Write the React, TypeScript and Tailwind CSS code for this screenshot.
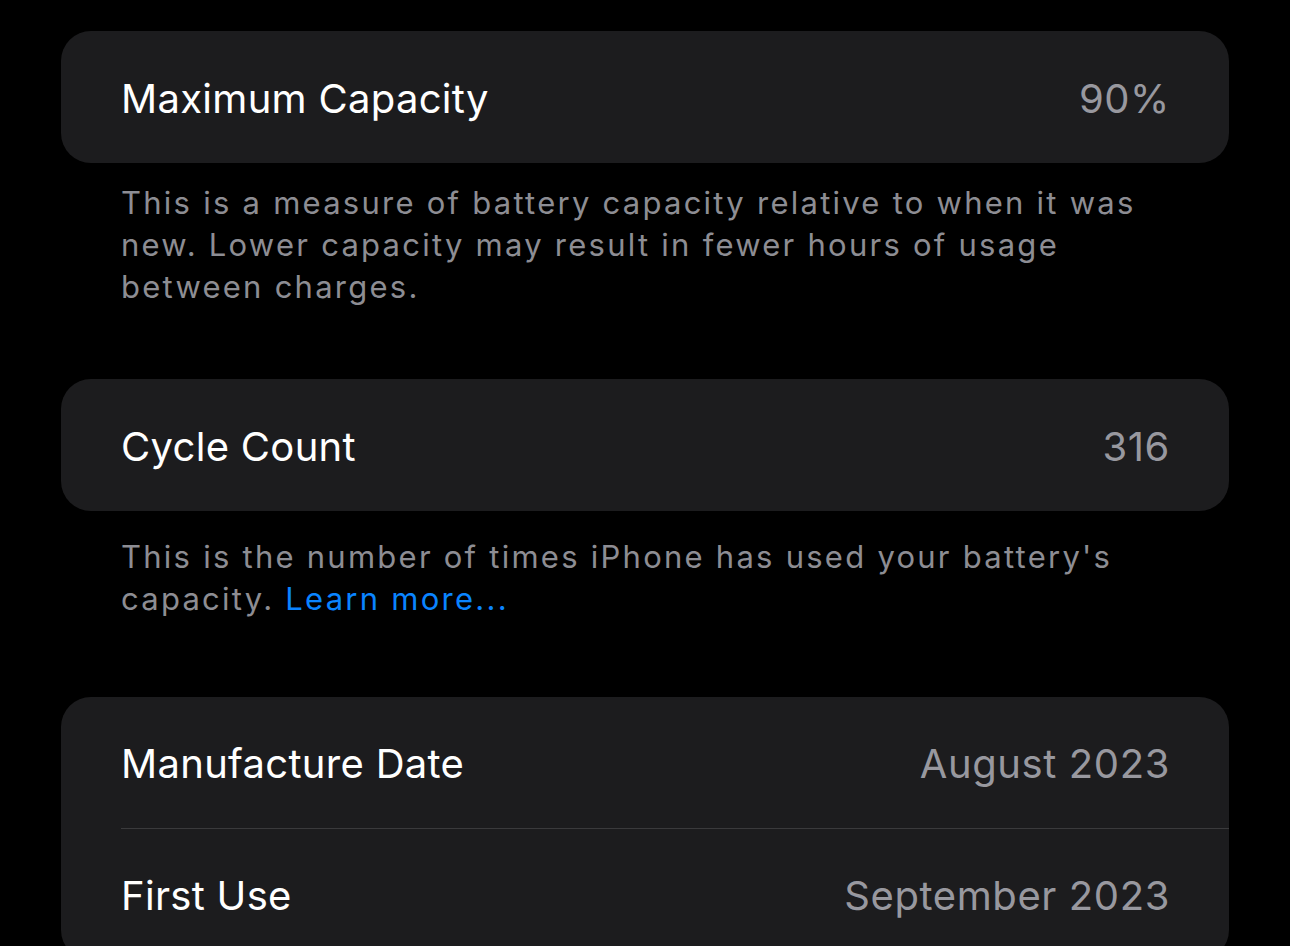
import React from "react";

const font = { fontFamily: "Inter, 'Noto Sans', sans-serif" };

function Row({ label, value }: { label: string; value: string }) {
  return (
    <div className="flex h-[131px] items-center justify-between pr-[59px] pt-[3px]">
      <span className="text-[40px] leading-none tracking-[0.3px] text-white">{label}</span>
      <span className="text-[40px] leading-none tracking-[0.6px] text-[#98989f]">{value}</span>
    </div>
  );
}

export default function App() {
  return (
    <div className="min-h-[946px] w-[1290px] overflow-hidden bg-black px-[61px] pt-[31px]" style={font}>
      <div className="rounded-[30px] bg-[#1c1c1e] pl-[60px]">
        <div className="h-[132px] flex items-center justify-between pr-[59px] pt-[3px]">
          <span className="text-[40px] leading-none tracking-[0.3px] text-white">Maximum Capacity</span>
          <span className="text-[40px] leading-none tracking-[0.6px] text-[#98989f]">90%</span>
        </div>
      </div>
      <p className="mt-[19px] px-[60px] text-[31px] leading-[42px] tracking-[2.25px] text-[#8d8d93] whitespace-nowrap">
        This is a measure of battery capacity relative to when it was
        <br />
        new. Lower capacity may result in fewer hours of usage
        <br />
        between charges.
      </p>

      <div className="mt-[71px] rounded-[30px] bg-[#1c1c1e] pl-[60px]">
        <div className="h-[132px] flex items-center justify-between pr-[59px] pt-[3px]">
          <span className="text-[40px] leading-none tracking-[0.3px] text-white">Cycle Count</span>
          <span className="text-[40px] leading-none tracking-[0.6px] text-[#98989f]">316</span>
        </div>
      </div>
      <p className="mt-[25px] px-[60px] text-[31px] leading-[42px] tracking-[2.25px] text-[#8d8d93] whitespace-nowrap">
        This is the number of times iPhone has used your battery's
        <br />
        capacity. <span className="text-[#0a84ff]">Learn more...</span>
      </p>

      <div className="mt-[77px] rounded-[30px] bg-[#1c1c1e] pl-[60px]">
        <Row label="Manufacture Date" value="August 2023" />
        <div className="h-px bg-[#3a3a3c]" />
        <Row label="First Use" value="September 2023" />
      </div>
    </div>
  );
}
